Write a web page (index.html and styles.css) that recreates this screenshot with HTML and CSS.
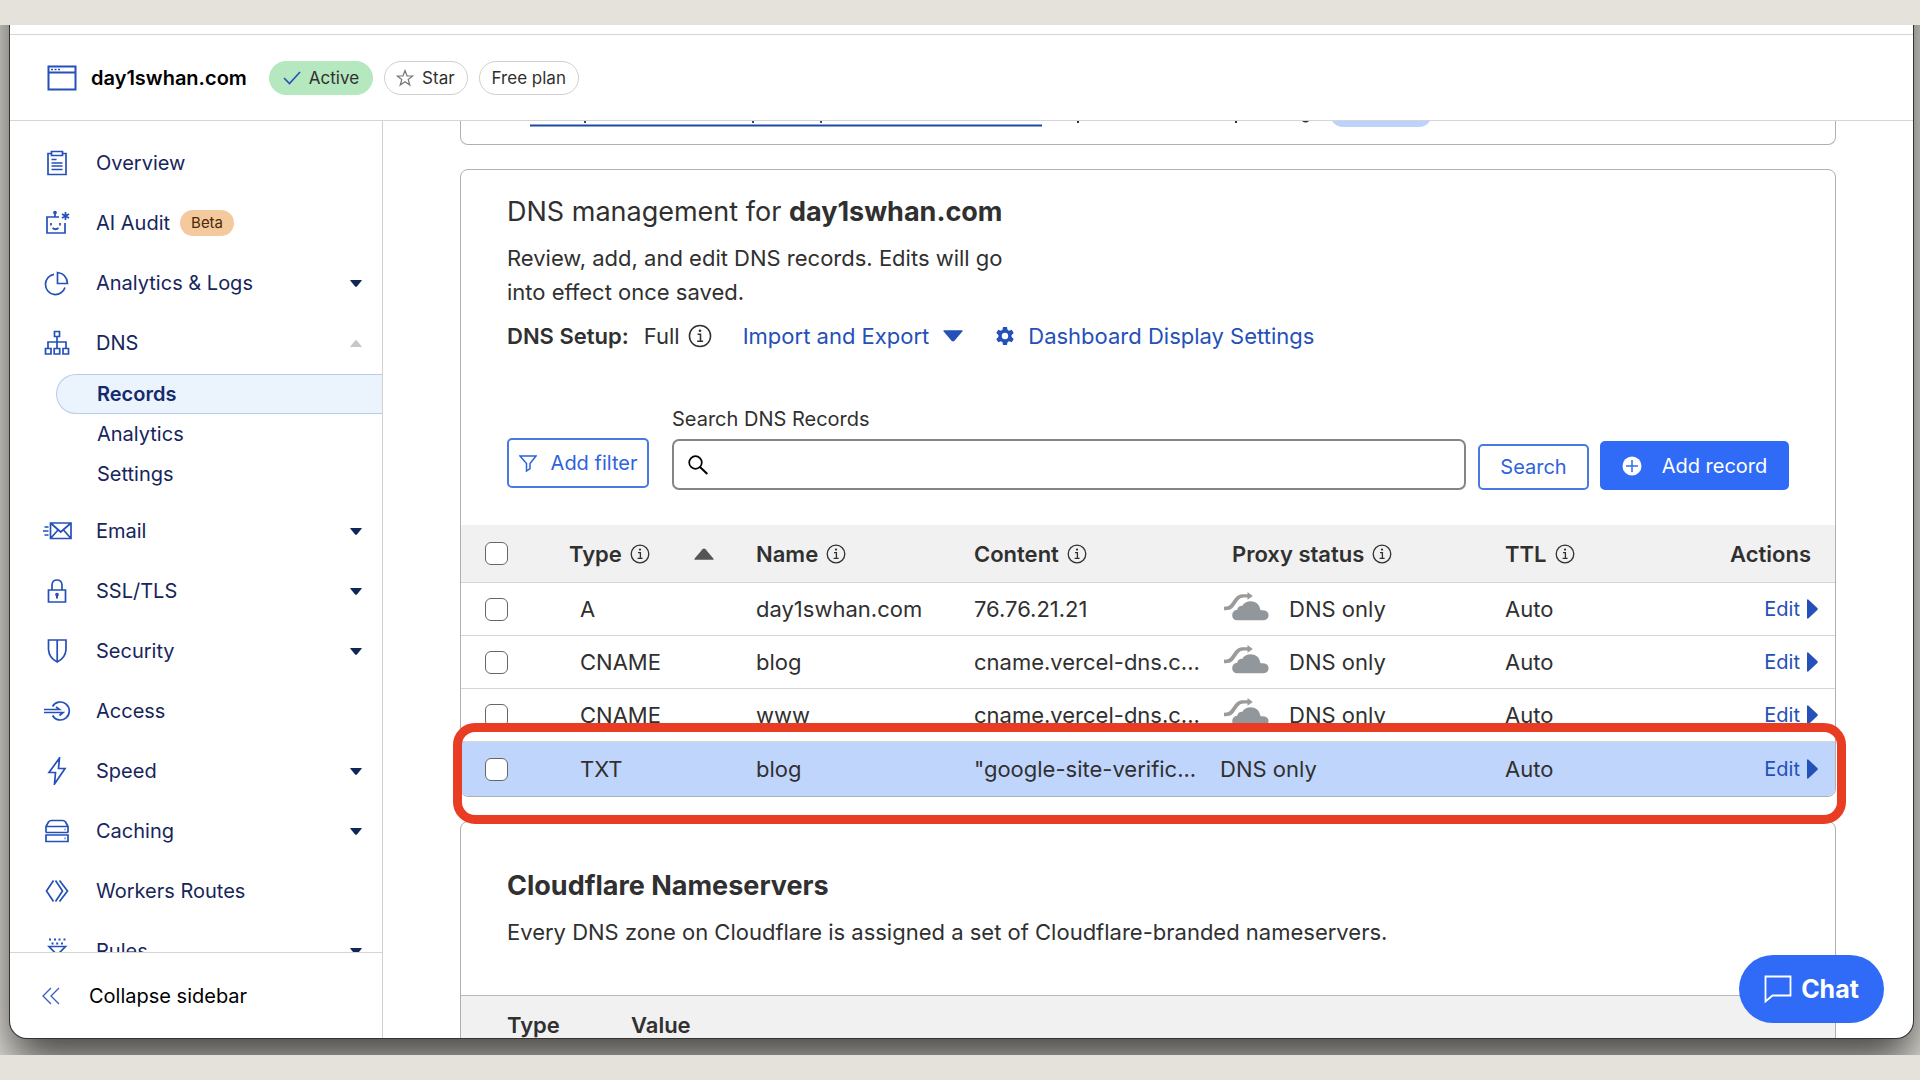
FILE: index.html
```
<!DOCTYPE html>
<html lang="en">
<head>
  <meta charset="UTF-8">
  <title>DNS Records | day1swhan.com</title>
  <link rel="stylesheet" href="styles.css">
</head>
<body>

<!-- shared icons -->
<svg class="defs" aria-hidden="true">
  <symbol id="i-info" viewBox="0 0 20 20"><circle cx="10" cy="10" r="8.8" fill="none" stroke="currentColor" stroke-width="1.3"/><path d="M8 8.6h2.4v5.6M7.6 14.4h5" fill="none" stroke="currentColor" stroke-width="1.3"/><circle cx="10" cy="5.6" r="1.1" fill="currentColor"/></symbol>
  <symbol id="i-down" viewBox="0 0 12 7"><path d="M.8 0h10.4q1 0 .4.8L6.9 6.4q-.9.9-1.8 0L.4.8Q-.2 0 .8 0z" fill="currentColor"/></symbol>
  <symbol id="i-play" viewBox="0 0 10 18"><path d="M0 .8Q.4-.2 1.4.6l8 7.6q.8.8 0 1.6l-8 7.6q-1 .8-1.4-.2z" fill="currentColor"/></symbol>
  <symbol id="i-cloud" viewBox="0 0 45 29"><path d="M0 18.200v-3.600q4.800.4 6.600-2.300l4.500-6.200Q14 2.200 18.500 2.200h5V0l5.300 3.900-5.300 3.800V5.500h-4.300q-3.200 0-5.200 2.900l-4.400 6.300Q7 18.500 0 18.200z" fill="#9b9b9b"/><path d="M13 28.300a5 5 0 0 1-4.800-5.400q.2-4.500 5-5.200.8-4 5.200-3.900Q20.600 9.200 27 9.200q8.200.3 9.600 9.100 7.800-.7 8 5-.2 4.700-4.800 5z" fill="#92979b"/></symbol>
</svg>

<div class="desktop">
  <div class="window">
    <header class="topbar">
      <svg class="site-icon" viewBox="0 0 30 26"><path d="M1.500 1.500h27v23h-27zM1.500 7.500h27" fill="none" stroke="currentColor" stroke-width="2"/><path d="M4 4.500h2M7.500 4.500h2M11 4.500h2" stroke="currentColor" stroke-width="1.500"/></svg>
      <h1 class="site-name">day1swhan.com</h1>
      <span class="pill pill-active"><svg width="18" height="14" viewBox="0 0 18 14"><path d="M1 7l5.500 5.500L17 1" fill="none" stroke="#2450b8" stroke-width="1.600"/></svg>Active</span>
      <button class="pill"><svg width="18" height="18" viewBox="0 0 18 18"><path d="M9 1.500l2 5.300 5.700.2-4.500 3.500 1.600 5.500L9 12.800 4.200 16l1.600-5.500L1.300 7l5.700-.2z" fill="none" stroke="#777" stroke-width="1.200"/></svg>Star</button>
      <span class="pill">Free plan</span>
    </header>

    <div class="layout">
      <aside class="sidebar">
        <nav class="nav">
          <a class="nav-item" href="#"><svg class="nav-icon" viewBox="0 0 26 26"><path d="M7.500 3.500H4v21h18v-21h-3.500M7.500 1.500h11v4h-11zM7.500 9.500h5M7.500 13h11M7.500 16h11M7.500 19.500h11"/></svg>Overview</a>
          <a class="nav-item" href="#"><svg class="nav-icon" viewBox="0 0 26 26"><path d="M15 7H3v16h18V13M11 7V3.500M7 13v2.500M16 13v2.500M8.500 18q3 2.500 6 0M21.500 2v8M18 4l7 4M25 4l-7 4"/><circle cx="11" cy="2.500" r="1"/></svg>AI Audit<span class="beta">Beta</span></a>
          <a class="nav-item" href="#"><svg class="nav-icon" viewBox="0 0 26 26"><path d="M10 4.300A10 10.200 0 1 0 21 17.500M13.500 2.500v11H23.500Q23 3.800 13.500 2.500z"/></svg>Analytics &amp; Logs<svg class="caret"><use href="#i-down"/></svg></a>
          <a class="nav-item" href="#"><svg class="nav-icon" viewBox="0 0 26 26"><path d="M10.500 1.500h5v5h-5zM13 7v11M4 18v-6h18v6M1.500 18.500h5.500v5.500H1.500zM10.200 18.500h5.500v5.500h-5.500zM19 18.500h5.500v5.500H19z"/></svg>DNS<svg class="caret caret-up"><use href="#i-down"/></svg></a>
          <div class="subnav">
            <a class="sub-item current" href="#">Records</a>
            <a class="sub-item" href="#">Analytics</a>
            <a class="sub-item" href="#">Settings</a>
          </div>
          <a class="nav-item" href="#"><svg class="nav-icon wide" viewBox="0 0 30 26"><path d="M8.500 5h20.500v15.500H8.500zM8.500 5l10.200 9L29 5M8.500 20.500l7.500-8.500M29 20.500L21.500 12M2.500 9h4M1 13h5.500M2.500 17h4"/></svg>Email<svg class="caret"><use href="#i-down"/></svg></a>
          <a class="nav-item" href="#"><svg class="nav-icon" viewBox="0 0 26 26"><path d="M4.500 12h17v12h-17zM8 12V7q.3-5 5-5t5 5v5"/><path d="M13 16.500v4" stroke-width="2"/><circle cx="13" cy="16.500" r="1"/></svg>SSL/TLS<svg class="caret"><use href="#i-down"/></svg></a>
          <a class="nav-item" href="#"><svg class="nav-icon" viewBox="0 0 26 26"><path d="M4.500 2h17.500v9.500q-.5 8.500-8.800 12.500Q5 20 4.500 11.500zM13.200 2v22"/></svg>Security<svg class="caret"><use href="#i-down"/></svg></a>
          <a class="nav-item" href="#"><svg class="nav-icon wide" viewBox="0 0 30 26"><path d="M10.500 8.500a9 9 0 1 1 0 9M2 11.500h15.500l-3.500-2.700M2 14.500h19l-3.500 3"/></svg>Access</a>
          <a class="nav-item" href="#"><svg class="nav-icon bolt" viewBox="0 0 26 28"><path d="M15.500 1L5 15.500h6.500l-1 11.500L21 11.500h-6.500z"/></svg>Speed<svg class="caret"><use href="#i-down"/></svg></a>
          <a class="nav-item" href="#"><svg class="nav-icon" viewBox="0 0 26 26"><path d="M2 8.500q.5-1 2.500-4.500 1-1.500 3-1.500h11q2 0 3 1.500 2 3.500 2.500 4.500v5q0 1-1 1H3q-1 0-1-1zM2 8.500h22M2 17h22v6.500H2zM20.500 11.500h1M20.500 20.300h1"/></svg>Caching<svg class="caret"><use href="#i-down"/></svg></a>
          <a class="nav-item" href="#"><svg class="nav-icon" viewBox="0 0 26 26"><path d="M9.500 2.500L2.500 13l7 10.500M11.500 2.500L18.500 13l-7 10.500M15.500 2.500L23.500 13l-8 10.500"/></svg>Workers Routes</a>
          <a class="nav-item" href="#"><svg class="nav-icon" viewBox="0 0 26 26"><path d="M5 8.500h16.500L13.200 17z"/><path d="M5 1.500h2M10 1.500h2M14.500 1.500h2M19.500 1.500h2M7.500 5.500h2M12.200 5.500h2M17 5.500h2" stroke-width="2"/></svg>Rules<svg class="caret"><use href="#i-down"/></svg></a>
        </nav>
        <button class="collapse"><svg width="18" height="18" viewBox="0 0 18 18"><path d="M9 1L1 9l8 8M17 1L9 9l8 8" fill="none" stroke="#3a5cc0" stroke-width="1.300"/></svg>Collapse sidebar</button>
      </aside>

      <main class="content">
        <!-- tail of the card that is scrolled under the top bar -->
        <section class="card card-tail">
          <svg width="1000" height="8" viewBox="0 0 1000 8">
            <path d="M69 4.500h512" stroke="#1f4a9e" stroke-width="2"/>
            <path d="M123 0h2v2h-2zM291 0h2v2h-2zM359 0h2v2h-2z" fill="#1f4a9e"/>
            <path d="M616 0h2v2h-2zM774 0h2v2h-2zM841 0h7q-3 3-7 0z" fill="#303030"/>
            <path d="M871 0h98q-4 6-12 6h-74q-8 0-12-6z" fill="#bdd2fb"/>
          </svg>
        </section>

        <section class="card">
          <div class="card-body">
            <h2 class="card-title">DNS management for <b>day1swhan.com</b></h2>
            <p class="intro">Review, add, and edit DNS records. Edits will go<br>into effect once saved.</p>
            <div class="setup">
              <b>DNS Setup:</b><span>Full</span><svg class="info-lg"><use href="#i-info"/></svg>
              <button class="text-btn import">Import and Export<svg class="import-caret"><use href="#i-down"/></svg></button>
              <a class="text-btn" href="#"><svg width="18" height="20" viewBox="0 0 18 20"><path fill="currentColor" fill-rule="evenodd" d="M7 1h4l.5 2.800 1.600.9 2.700-1 1.900 3.300-2.100 1.900v2.200l2.100 1.900-1.900 3.300-2.700-1-1.600.9L11 19H7l-.5-2.800-1.600-.9-2.700 1L.3 13l2.100-1.900V8.900L.3 7l1.900-3.300 2.700 1 1.600-.9zM9 6.800a3.200 3.200 0 1 0 0 6.400 3.200 3.200 0 1 0 0-6.400z"/></svg>Dashboard Display Settings</a>
            </div>

            <div class="toolbar">
              <button class="btn btn-filter"><svg width="18" height="17" viewBox="0 0 18 17"><path d="M1 1h16l-6 7.500v5L7.500 16V8.500z" fill="none" stroke="currentColor" stroke-width="1.500"/></svg>Add filter</button>
              <div class="search">
                <label for="q">Search DNS Records</label>
                <div class="search-box">
                  <svg width="20" height="20" viewBox="0 0 20 20"><circle cx="7.500" cy="7.500" r="6.300" fill="none" stroke="#000" stroke-width="1.700"/><path d="M12 12l7.300 7" stroke="#000" stroke-width="2"/></svg>
                  <input type="text" id="q">
                </div>
              </div>
              <button class="btn btn-search">Search</button>
              <button class="btn btn-primary"><svg width="20" height="20" viewBox="0 0 20 20"><circle cx="10" cy="10" r="9.500" fill="#fff"/><path d="M10 4v12M4 10h12" stroke="#2f6bf6" stroke-width="1.500"/></svg>Add record</button>
            </div>
          </div>

          <table class="records">
            <colgroup><col class="c-check"><col class="c-type"><col class="c-name"><col class="c-content"><col class="c-proxy"><col class="c-ttl"><col></colgroup>
            <thead>
              <tr>
                <th class="check"><input type="checkbox" aria-label="Select all"></th>
                <th><span class="th sortable">Type <svg class="info"><use href="#i-info"/></svg><svg class="sort"><use href="#i-down"/></svg></span></th>
                <th><span class="th">Name <svg class="info"><use href="#i-info"/></svg></span></th>
                <th><span class="th">Content <svg class="info"><use href="#i-info"/></svg></span></th>
                <th class="proxy-head"><span class="th">Proxy status <svg class="info"><use href="#i-info"/></svg></span></th>
                <th><span class="th">TTL <svg class="info"><use href="#i-info"/></svg></span></th>
                <th class="actions">Actions</th>
              </tr>
            </thead>
            <tbody>
              <tr>
                <td class="check"><input type="checkbox" aria-label="Select A day1swhan.com"></td>
                <td class="type">A</td><td>day1swhan.com</td><td>76.76.21.21</td>
                <td><span class="proxy"><svg class="cloud"><use href="#i-cloud"/></svg>DNS only</span></td>
                <td>Auto</td><td class="edit"><a href="#">Edit<svg class="play"><use href="#i-play"/></svg></a></td>
              </tr>
              <tr>
                <td class="check"><input type="checkbox" aria-label="Select CNAME blog"></td>
                <td class="type">CNAME</td><td>blog</td><td>cname.vercel-dns.c...</td>
                <td><span class="proxy"><svg class="cloud"><use href="#i-cloud"/></svg>DNS only</span></td>
                <td>Auto</td><td class="edit"><a href="#">Edit<svg class="play"><use href="#i-play"/></svg></a></td>
              </tr>
              <tr>
                <td class="check"><input type="checkbox" aria-label="Select CNAME www"></td>
                <td class="type">CNAME</td><td>www</td><td>cname.vercel-dns.c...</td>
                <td><span class="proxy"><svg class="cloud"><use href="#i-cloud"/></svg>DNS only</span></td>
                <td>Auto</td><td class="edit"><a href="#">Edit<svg class="play"><use href="#i-play"/></svg></a></td>
              </tr>
              <tr class="selected">
                <td class="check"><input type="checkbox" aria-label="Select TXT blog"></td>
                <td class="type">TXT</td><td>blog</td><td>"google-site-verific...</td>
                <td>DNS only</td>
                <td>Auto</td><td class="edit"><a href="#">Edit<svg class="play"><use href="#i-play"/></svg></a></td>
              </tr>
            </tbody>
          </table>
          <div class="marker"></div>
        </section>

        <section class="card">
          <div class="card-body ns-body">
            <h2 class="card-title"><b>Cloudflare Nameservers</b></h2>
            <p class="intro">Every DNS zone on Cloudflare is assigned a set of Cloudflare-branded nameservers.</p>
          </div>
          <table class="ns-table">
            <colgroup><col class="c-ns-type"><col></colgroup>
            <thead><tr><th class="ns-type">Type</th><th>Value</th></tr></thead>
          </table>
        </section>
      </main>
    </div>

    <button class="chat"><svg width="28" height="28" viewBox="0 0 28 28"><path d="M1.500 1.500h25v19H8.500l-7 6z" fill="none" stroke="#fff" stroke-width="1.800"/></svg>Chat</button>
  </div>
</div>

</body>
</html>
```

FILE: styles.css
```
* { box-sizing: border-box; }
body { margin: 0; height: 100vh; padding: 25px 0; background: #e5e2db; color: #303030; font-family: Inter, "Liberation Sans", sans-serif; font-size: 22px; overflow: hidden; }
h1, h2, p { margin: 0; }
a { color: inherit; text-decoration: none; }
button { font: inherit; color: inherit; background: none; border: 0; padding: 0; }
b { font-weight: 600; }
svg { flex: none; }
.defs { display: none; }

/* browser window, its top runs out of view */
.desktop { height: 100%; overflow: hidden; display: flex; padding: 0 7px 17px 10px; }
.window { position: relative; flex: 1; min-width: 0; margin-top: -120px; padding-top: 129px; display: flex; flex-direction: column; background: #fff; border-radius: 0 0 17px 17px; box-shadow: 0 0 0 1px #333, 0 24px 45px rgba(0,0,0,.7); }

.topbar { height: 87px; display: flex; align-items: center; gap: 11px; padding: 0 37px; border-top: 1px solid #d5d5d5; border-bottom: 1px solid #d5d5d5; }
.site-icon { width: 30px; height: 26px; color: #2450b8; }
.site-name { font-size: 20px; font-weight: 600; color: #000; margin: 0 11px 0 3px; }
.pill { height: 34px; display: flex; align-items: center; gap: 8px; padding: 0 12px; border: 1px solid #d0d0d0; border-radius: 17px; font-size: 17px; }
.pill svg { margin-left: -1px; }
.pill-active { padding: 0 13px 0 14px; background: #b5e8bf; border-color: #b5e8bf; }

.layout { flex: 1; min-height: 0; display: flex; }
.sidebar { width: 373px; flex: none; display: flex; flex-direction: column; border-right: 1px solid #d0d0d0; color: #16265c; font-size: 20px; }
.nav { flex: 1; min-height: 0; overflow: hidden; padding-top: 12px; }
.nav-item { height: 60px; display: flex; align-items: center; padding: 0 20px 0 34px; }
.nav-icon { width: 26px; height: 26px; margin-right: 26px; color: #2450b8; fill: none; stroke: currentColor; stroke-width: 1.7; }
.nav-icon.wide { width: 30px; margin-left: -2px; margin-right: 24px; }
.nav-icon.bolt { height: 28px; }
.beta { margin-left: 10px; padding: 0 11px; height: 26px; line-height: 26px; border-radius: 13px; background: #f3c99d; color: #4a2a0a; font-size: 15px; }
.caret { width: 12px; height: 7px; margin-left: auto; color: #0f2659; }
.caret-up { transform: rotate(180deg); color: #c8c8c8; }
.subnav { padding: 1px 0 7px 46px; }
.sub-item { display: flex; align-items: center; height: 40px; padding-left: 40px; border: 1px solid transparent; border-right: 0; border-radius: 20px 0 0 20px; }
.sub-item.current { background: #ebf3fd; border-color: #b9cbe9; font-weight: 600; color: #152a6b; }
.collapse { height: 86px; display: flex; align-items: center; gap: 29px; padding-left: 32px; border-top: 1px solid #d5d5d5; color: #000; }

.content { flex: 1; min-width: 0; overflow: hidden; padding: 0 77px; }
.card { position: relative; border: 1px solid #b0b0b0; border-radius: 8px; margin-bottom: 24px; }
.card-tail { height: 24px; border-top: 0; border-radius: 0 0 8px 8px; overflow: hidden; }
.card-tail svg { display: block; }
.card-body { padding: 24px 46px 35px; }
.card-title { font-size: 27px; line-height: 36px; font-weight: 400; }
.card-title b { font-weight: 700; }
.intro { margin-top: 11px; line-height: 34px; }
.setup { display: flex; align-items: center; height: 34px; margin-top: 10px; }
.setup span { margin-left: 15px; }
.info-lg { width: 24px; height: 24px; margin-left: 8px; }
.text-btn { display: flex; align-items: center; gap: 14px; color: #2450b8; }
.import { margin: 0 33px 0 31px; }
.import-caret { width: 20px; height: 12px; }

.toolbar { display: flex; align-items: flex-end; margin-top: 54px; font-size: 20px; }
.btn { display: flex; align-items: center; justify-content: center; border: 2px solid #4a79e0; border-radius: 5px; color: #2f62dd; }
.btn-filter { width: 142px; height: 50px; gap: 14px; margin: 0 23px 2px 0; }
.btn-search { width: 111px; height: 46px; margin: 0 11px 0 12px; }
.btn-primary { width: 189px; height: 49px; gap: 20px; background: #2f6bf6; border-color: #2f6bf6; color: #fff; }
.search { flex: 1; display: flex; flex-direction: column; gap: 8px; }
.search label { line-height: 24px; }
.search-box { height: 51px; display: flex; align-items: center; padding-left: 14px; border: 2px solid #858585; border-radius: 7px; }
.search-box input { flex: 1; height: 40px; border: 0; outline: 0; background: none; font: inherit; padding: 0 10px; }

table { width: 100%; table-layout: fixed; border-collapse: separate; border-spacing: 0; }
th { height: 58px; padding: 0 0 0 12px; background: #f1f1f1; border-bottom: 1px solid #d5d5d5; text-align: left; font-weight: 600; }
td { height: 53px; padding: 0 0 0 12px; border-bottom: 1px solid #d5d5d5; white-space: nowrap; }
.c-check { width: 96px; }
.c-type { width: 187px; }
.c-name { width: 218px; }
.c-content { width: 246px; }
.c-proxy { width: 285px; }
.c-ttl { width: 210px; }
.th { display: flex; align-items: center; gap: 8px; white-space: nowrap; }
.info { width: 20px; height: 20px; }
.sort { width: 20px; height: 12px; margin: 0 30px 0 auto; color: #555; transform: rotate(180deg); }
.proxy-head { padding-left: 24px; }
.check { padding-left: 24px; }
.check input { appearance: none; display: block; width: 23px; height: 23px; margin: 0; background: #fff; border: 1px solid #666; border-radius: 6px; }
.type { padding-left: 23px; }
.proxy { display: flex; align-items: center; gap: 20px; padding-left: 4px; }
.cloud { width: 45px; height: 29px; margin-bottom: 6px; }
.actions { padding-right: 24px; text-align: right; }
.edit { padding-right: 17px; color: #2450b8; font-size: 20px; }
.edit a { display: flex; align-items: center; justify-content: flex-end; gap: 7px; }
.play { width: 11px; height: 20px; }
.selected td { background: #c0d5fc; height: 54px; border-bottom: 0; }
.selected td:first-child { border-bottom-left-radius: 7px; }
.selected td:last-child { border-bottom-right-radius: 7px; }

/* red frame round the verification record */
.marker { position: absolute; left: -8px; right: -11px; bottom: -28px; height: 101px; border: 9px solid #e93d23; border-radius: 22px; pointer-events: none; z-index: 1; }

.ns-body { padding-top: 46px; padding-bottom: 46px; }
.ns-table th { border-top: 1px solid #b9b9b9; height: 60px; }
.c-ns-type { width: 158px; }
.ns-table .ns-type { padding-left: 46px; }

.chat { position: absolute; right: 29px; bottom: 15px; width: 145px; height: 68px; display: flex; align-items: center; justify-content: center; gap: 9px; border-radius: 34px; background: #2f6bf6; color: #fff; font-size: 25px; font-weight: 700; z-index: 2; }
```
